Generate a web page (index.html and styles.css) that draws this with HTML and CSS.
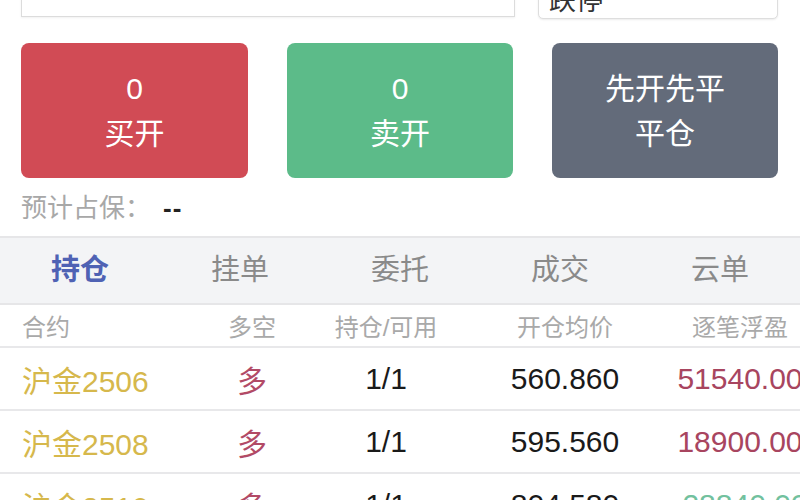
FILE: index.html
```html
<!DOCTYPE html>
<html lang="zh-CN">
<head>
<meta charset="utf-8">
<title>持仓</title>
<link rel="stylesheet" href="styles.css">
</head>
<body>
<div class="page">
  <div class="top">
    <div class="input"></div>
    <div class="select"><span class="sel-text">跌停</span><span class="arrow">▾</span></div>
  </div>
  <div class="actions">
    <div class="btn buy"><span>0</span><span>买开</span></div>
    <div class="btn sell"><span>0</span><span>卖开</span></div>
    <div class="btn close"><span>先开先平</span><span>平仓</span></div>
  </div>
  <div class="margin">预计占保：<span class="dash">--</span></div>
  <div class="tabs">
    <div class="tab active">持仓</div>
    <div class="tab">挂单</div>
    <div class="tab">委托</div>
    <div class="tab">成交</div>
    <div class="tab">云单</div>
  </div>
  <div class="table">
    <div class="row head">
      <div class="c1">合约</div>
      <div class="c2">多空</div>
      <div class="c3">持仓/可用</div>
      <div class="c4">开仓均价</div>
      <div class="c5">逐笔浮盈</div>
    </div>
    <div class="row">
      <div class="c1 gold">沪金2506</div>
      <div class="c2 long">多</div>
      <div class="c3">1/1</div>
      <div class="c4">560.860</div>
      <div class="c5 up">51540.00</div>
    </div>
    <div class="row">
      <div class="c1 gold">沪金2508</div>
      <div class="c2 long">多</div>
      <div class="c3">1/1</div>
      <div class="c4">595.560</div>
      <div class="c5 up">18900.00</div>
    </div>
    <div class="row">
      <div class="c1 gold">沪金2510</div>
      <div class="c2 long">多</div>
      <div class="c3">1/1</div>
      <div class="c4">804.580</div>
      <div class="c5 down">-28840.00</div>
    </div>
  </div>
</div>
</body>
</html>
```
FILE: styles.css
```css
html, body {
  margin: 0;
  padding: 0;
  background: #ffffff;
  overflow: hidden;
}
body {
  width: 800px;
  height: 500px;
  font-family: "Liberation Sans", "Noto Sans CJK SC", sans-serif;
}
.page {
  width: 800px;
}
.top {
  display: flex;
  align-items: flex-start;
  margin-top: -40px;
  padding: 0 22px 0 21px;
  gap: 23px;
}
.input {
  width: 492px;
  height: 55px;
  border: 1px solid #dcdcdc;
  background: #fff;
  box-shadow: 0 1px 2px rgba(0,0,0,0.06);
}
.select {
  flex: 1;
  height: 59px;
  border: 1px solid #dedede;
  border-radius: 5px;
  background: #fff;
  box-shadow: 0 1px 2px rgba(0,0,0,0.08);
  display: flex;
  align-items: flex-end;
  justify-content: space-between;
  padding: 0 10px 6px 10px;
  box-sizing: border-box;
  color: #333;
}
.sel-text {
  font-size: 27px;
  line-height: 27px;
  margin-bottom: -3px;
}
.arrow {
  font-size: 14px;
  line-height: 14px;
  margin-bottom: 12px;
  color: #333;
}
.actions {
  display: grid;
  grid-template-columns: 227px 226px 226px;
  gap: 39px;
  padding: 0 22px 0 21px;
  margin-top: 24px;
}
.btn {
  height: 135px;
  border-radius: 8px;
  display: flex;
  flex-direction: column;
  align-items: center;
  justify-content: center;
  color: #fff;
  font-size: 30px;
  line-height: 45px;
}
.buy { background: #d14b55; }
.sell { background: #5cbb89; }
.close { background: #636b7a; }
.margin {
  padding-left: 21px;
  height: 58px;
  line-height: 60px;
  font-size: 26px;
  color: #a8a8a8;
}
.dash {
  color: #222;
  margin-left: 12px;
  font-weight: 700;
  letter-spacing: 1px;
}
.tabs {
  display: grid;
  grid-template-columns: repeat(5, 160px);
  background: #f3f4f6;
  border-top: 2px solid #e6e6e8;
  border-bottom: 2px solid #e6e6e8;
  height: 65px;
}
.tab {
  text-align: center;
  line-height: 65px;
  font-size: 29px;
  color: #8a8a8a;
}
.tab.active {
  color: #4f62b4;
  font-weight: 600;
}
.table {
  width: 820px;
}
.row {
  display: grid;
  grid-template-columns: 180px 100px 168px 190px 160px;
  padding-left: 22px;
  height: 61px;
  align-items: center;
  border-bottom: 2px solid #e8e8ea;
  font-size: 30px;
  color: #1a1a1a;
  white-space: nowrap;
}
.row.head {
  height: 41px;
  font-size: 24px;
  color: #a9a9a9;
}
.c1 { text-align: left; }
.c2, .c3, .c4, .c5 { text-align: center; }
.gold { color: #d6b84c; }
.long { color: #b24a66; }
.up { color: #a8455f; }
.down { color: #72c19e; }
```
